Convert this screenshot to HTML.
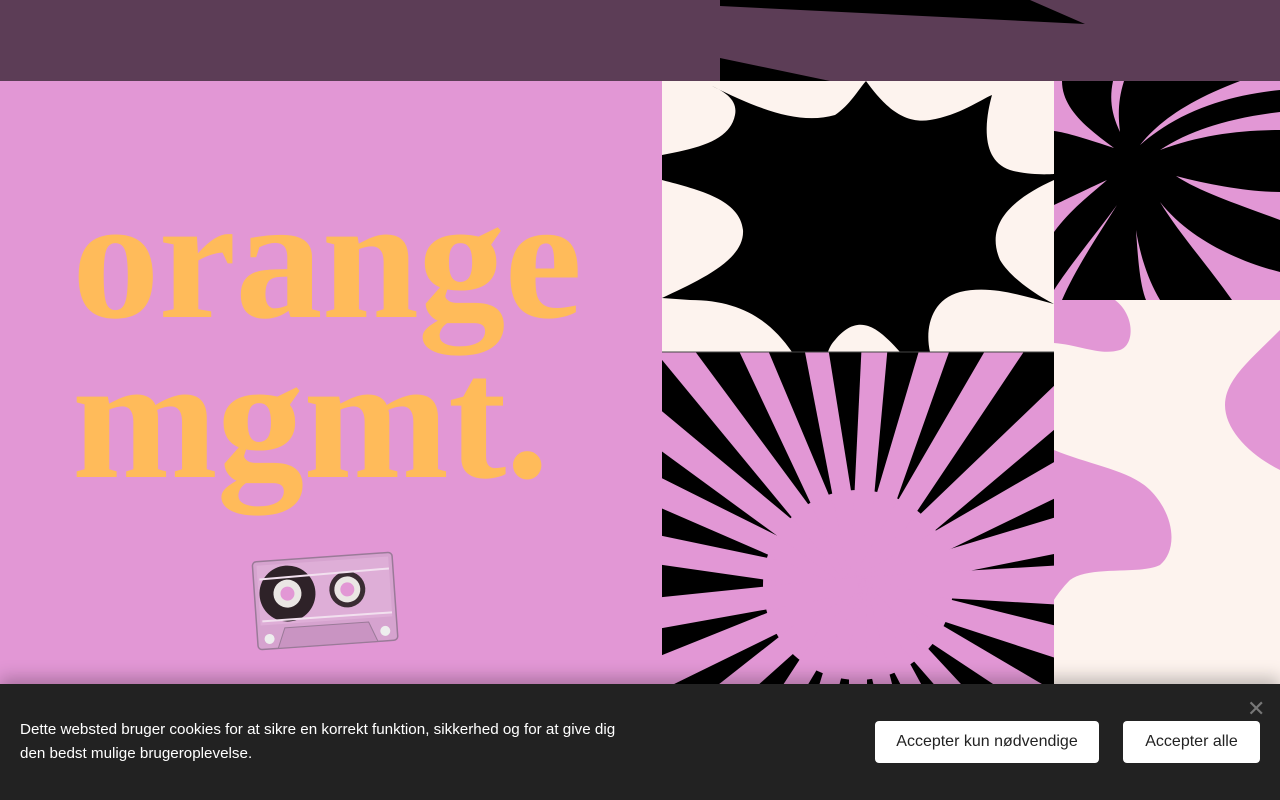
<!DOCTYPE html>
<html><head><meta charset="utf-8">
<style>
*{margin:0;padding:0;box-sizing:border-box}
html,body{width:1280px;height:800px;overflow:hidden;background:#e297d5;position:relative}
.hdr{position:absolute;left:0;top:0;width:1280px;height:81px;background:#5c3d56;overflow:hidden}
.logo{position:absolute;left:72px;top:178px;font-family:"Liberation Serif",serif;font-weight:bold;color:#ffbb5a;font-size:175px;line-height:160px;letter-spacing:-1px;white-space:nowrap}
.cookie{position:absolute;left:0;top:684px;width:1280px;height:116px;background:#222;box-shadow:0 -6px 16px rgba(0,0,0,.25)}
.ctext{position:absolute;left:20px;top:34px;width:620px;color:#fff;font-family:"Liberation Sans",sans-serif;font-size:15.2px;line-height:24px}
.btn{position:absolute;top:37px;height:42px;background:#fff;border-radius:4px;color:#222;font-family:"Liberation Sans",sans-serif;font-size:16px;line-height:42px;text-align:center}
.x{position:absolute;left:1247px;top:12px;color:#777;font-family:"Liberation Sans",sans-serif;font-size:22px}
</style></head><body>
<div class="hdr">
<svg width="1280" height="81" style="position:absolute;left:0;top:0">
<polygon points="720,0 1030,0 1085,24 720,6" fill="#000"/>
<polygon points="720,58 830,81 720,81" fill="#000"/>
</svg>
</div>

<svg width="618" height="603" style="position:absolute;left:662px;top:81px" viewBox="662 81 618 603">
<defs>
<clipPath id="c1"><rect x="662" y="352" width="392" height="332"/></clipPath>
</defs>
<!-- top middle tile -->
<rect x="662" y="81" width="392" height="271" fill="#fdf3ee"/>
<path d="M712,86 C760,110 800,125 835,115 C850,105 858,90 866,81 C880,100 900,125 930,120 C960,115 980,100 992,95 C985,120 980,160 1010,170 C1030,176 1054,174 1054,174 L1054,180 C1010,200 985,225 1000,260 C1015,285 1054,304 1054,304 C1020,295 990,285 960,292 C930,300 925,330 930,352 L900,352 C880,330 860,310 835,340 C830,345 828,352 828,352 L792,352 C770,320 740,300 690,300 L662,298 C700,280 745,260 743,230 C740,200 700,190 662,180 L662,155 C700,148 730,140 735,115 C738,100 725,92 712,86 Z" fill="#000"/>

<!-- right top flower -->
<rect x="1054" y="81" width="226" height="219" fill="#000"/>
<g fill="#e297d5">
<path d="M1054,81 L1062,81 C1062,110 1090,130 1114,148 C1090,140 1065,132 1054,131 Z"/>
<path d="M1113,81 L1124,81 C1118,100 1118,115 1120,132 C1112,115 1109,100 1113,81 Z"/>
<path d="M1140,145 C1180,110 1230,95 1280,90 L1280,81 L1240,81 C1190,100 1160,120 1140,145 Z"/>
<path d="M1160,150 C1200,135 1240,130 1280,130 L1280,112 C1230,118 1190,130 1160,150 Z"/>
<path d="M1176,176 C1210,185 1250,192 1280,192 L1280,220 C1240,205 1200,192 1176,176Z"/>
<path d="M1160,202 C1190,240 1240,262 1280,272 L1280,300 L1232,300 C1205,262 1178,232 1160,202 Z"/>
<path d="M1136,230 C1138,260 1140,285 1146,300 L1160,300 C1148,280 1140,255 1136,230Z"/>
<path d="M1117,205 C1095,240 1075,270 1062,300 L1054,300 L1054,290 C1070,265 1095,235 1117,205Z"/>
<path d="M1107,180 C1085,190 1065,200 1054,205 L1054,232 C1070,210 1090,195 1107,180Z"/>
</g>

<!-- right bottom cream -->
<rect x="1054" y="300" width="226" height="384" fill="#fdf3ee"/>
<path d="M1054,300 L1115,300 C1135,315 1135,345 1120,350 C1100,356 1080,345 1054,343 Z" fill="#e297d5"/>
<path d="M1054,450 C1090,465 1130,470 1150,490 C1175,515 1178,550 1160,565 C1140,575 1090,565 1070,580 C1060,590 1054,600 1054,600 Z" fill="#e297d5"/>
<path d="M1280,330 C1250,360 1225,380 1225,405 C1225,430 1250,455 1280,470 Z" fill="#e297d5"/>

<!-- bottom middle sunburst -->
<rect x="662" y="352" width="392" height="332" fill="#000"/>
<g clip-path="url(#c1)">
<g transform="translate(858,585)" fill="#e297d5">
<circle r="95"/>
<polygon points="-8,0 8,0 20,-380 -20,-380" transform="rotate(-80)"/>
<polygon points="-8,0 8,0 18,-380 -18,-380" transform="rotate(-65)"/>
<polygon points="-8,0 8,0 20,-380 -20,-380" transform="rotate(-52)"/>
<polygon points="-8,0 8,0 18,-380 -18,-380" transform="rotate(-38)"/>
<polygon points="-8,0 8,0 16,-380 -16,-380" transform="rotate(-24)"/>
<polygon points="-8,0 8,0 14,-380 -14,-380" transform="rotate(-10)"/>
<polygon points="-8,0 8,0 16,-380 -16,-380" transform="rotate(4)"/>
<polygon points="-8,0 8,0 18,-380 -18,-380" transform="rotate(18)"/>
<polygon points="-8,0 8,0 20,-380 -20,-380" transform="rotate(32)"/>
<polygon points="-8,0 8,0 20,-380 -20,-380" transform="rotate(48)"/>
<polygon points="-8,0 8,0 22,-380 -22,-380" transform="rotate(62)"/>
<polygon points="-8,0 8,0 26,-380 -26,-380" transform="rotate(76)"/>
<polygon points="-8,0 8,0 30,-380 -30,-380" transform="rotate(90)"/>
<polygon points="-8,0 8,0 22,-380 -22,-380" transform="rotate(106)"/>
<polygon points="-8,0 8,0 18,-380 -18,-380" transform="rotate(122)"/>
<polygon points="-8,0 8,0 14,-380 -14,-380" transform="rotate(138)"/>
<polygon points="-8,0 8,0 12,-380 -12,-380" transform="rotate(152)"/>
<polygon points="-8,0 8,0 12,-380 -12,-380" transform="rotate(166)"/>
<polygon points="-8,0 8,0 12,-380 -12,-380" transform="rotate(180)"/>
<polygon points="-8,0 8,0 14,-380 -14,-380" transform="rotate(196)"/>
<polygon points="-8,0 8,0 16,-380 -16,-380" transform="rotate(212)"/>
<polygon points="-8,0 8,0 20,-380 -20,-380" transform="rotate(230)"/>
<polygon points="-8,0 8,0 22,-380 -22,-380" transform="rotate(246)"/>
<polygon points="-8,0 8,0 22,-380 -22,-380" transform="rotate(262)"/>
</g>
</g>
<line x1="662" y1="352" x2="1054" y2="352" stroke="#444" stroke-width="1"/>
</svg>

<div class="logo">orange<br>mgmt.</div>

<!-- cassette -->
<svg width="160" height="110" style="position:absolute;left:245px;top:545px">
<g transform="rotate(-4 80 55)">
<rect x="10" y="12" width="140" height="88" rx="4" fill="#d6a3cf" stroke="#9a7a98" stroke-width="1.5"/>
<rect x="14" y="16" width="132" height="60" fill="#e2b6dc" opacity=".6"/>
<circle cx="43" cy="46" r="28" fill="#2e2228"/>
<circle cx="43" cy="46" r="14" fill="#eae6e4"/>
<circle cx="43" cy="46" r="7" fill="#e297d5"/>
<circle cx="103" cy="46" r="18" fill="#3a2c33"/>
<circle cx="103" cy="46" r="13" fill="#eae6e4"/>
<circle cx="103" cy="46" r="7" fill="#e297d5"/>
<line x1="16" y1="30" x2="146" y2="28" stroke="#f2e0ef" stroke-width="2"/>
<line x1="16" y1="72" x2="146" y2="72" stroke="#f2e0ef" stroke-width="2"/>
<path d="M30,100 L38,80 L122,80 L130,100 Z" fill="#c994c2" stroke="#9a7a98"/>
<circle cx="22" cy="90" r="5" fill="#eee"/><circle cx="138" cy="90" r="5" fill="#eee"/>
</g>
</svg>

<div class="cookie">
<div class="ctext">Dette websted bruger cookies for at sikre en korrekt funktion, sikkerhed og for at give dig den bedst mulige brugeroplevelse.</div>
<div class="btn" style="left:875px;width:224px">Accepter kun nødvendige</div>
<div class="btn" style="left:1123px;width:137px">Accepter alle</div>
<div class="x">✕</div>
</div>
</body></html>
